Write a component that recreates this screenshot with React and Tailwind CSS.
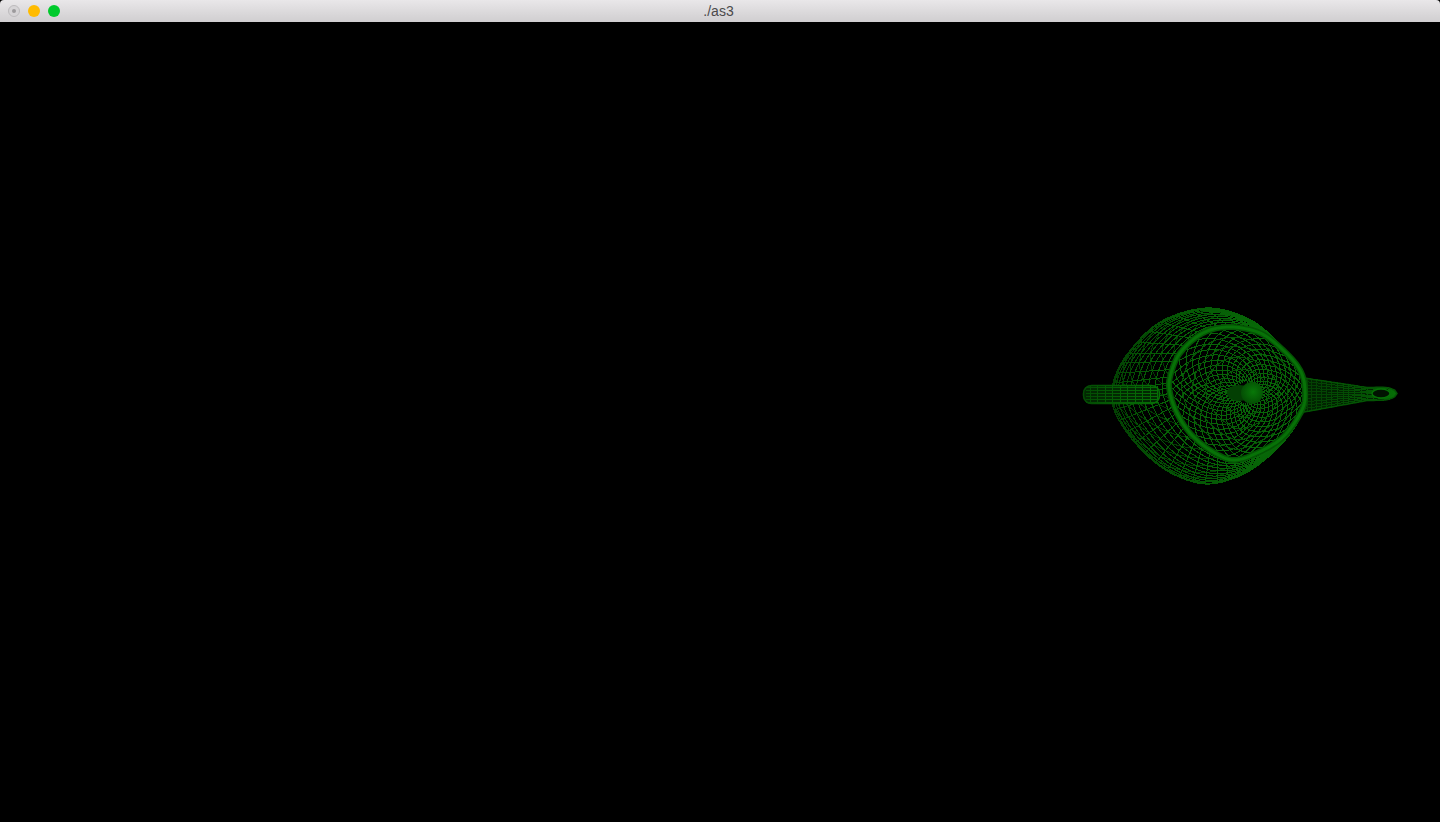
const ORIGIN_X = 1070;
const ORIGIN_Y = 273;

// key points of the wireframe, same index = same meridian
const RIM = [[1170,377],[1180,353],[1203,333],[1230,327],[1260,333],[1283,350],[1300,370],[1305,390],[1302,410],[1283,437],[1257,453],[1233,460],[1210,450],[1190,433],[1177,413],[1170,393]];
const OUTER = [[1113,383],[1128,353],[1160,322],[1205,308],[1245,317],[1274,338],[1296,366],[1306,392],[1302,414],[1287,438],[1266,459],[1240,476],[1205,484],[1167,471],[1135,443],[1114,410]];
const LID_CENTER = [1248, 393];

function spline(points, t) {
  const n = points.length;
  const u = ((t % 1) + 1) % 1 * n;
  const i = Math.floor(u);
  const f = u - i;
  const p0 = points[(i - 1 + n) % n];
  const p1 = points[i % n];
  const p2 = points[(i + 1) % n];
  const p3 = points[(i + 2) % n];
  const c = (a, b, d, e) =>
    0.5 * (2 * b + (d - a) * f + (2 * a - 5 * b + 4 * d - e) * f * f + (3 * b - a - 3 * d + e) * f * f * f);
  return [c(p0[0], p1[0], p2[0], p3[0]), c(p0[1], p1[1], p2[1], p3[1])];
}

const at = (p) => `${(p[0] - ORIGIN_X).toFixed(1)} ${(p[1] - ORIGIN_Y).toFixed(1)}`;
const line = (pts) => "M" + pts.map(at).join("L");
const mix = (a, b, k) => [a[0] + (b[0] - a[0]) * k, a[1] + (b[1] - a[1]) * k];
const range = (n) => Array.from({ length: n }, (_, i) => i);

const AROUND = 48;
const RINGS = 13;

function bodyPoint(t, s) {
  return mix(spline(RIM, t), spline(OUTER, t), Math.sin((s * Math.PI) / 2));
}

function lidPoint(t, r) {
  return mix(LID_CENTER, spline(RIM, t), r);
}

function closedCurve(points) {
  return line(range(161).map((i) => spline(points, i / 160)));
}

function bodyMesh() {
  let d = "";
  range(AROUND).forEach((a) => {
    d += line(range(RINGS + 1).map((s) => bodyPoint(a / AROUND, s / RINGS)));
  });
  range(RINGS + 1).forEach((s) => {
    d += line(range(161).map((i) => bodyPoint(i / 160, s / RINGS)));
  });
  return d;
}

function bodyDiagonals() {
  let d = "";
  range(AROUND).forEach((a) => {
    range(RINGS).forEach((s) => {
      if ((a + s) % 2 === 0) {
        d += line([bodyPoint(a / AROUND, s / RINGS), bodyPoint((a + 1) / AROUND, (s + 1) / RINGS)]);
      }
    });
  });
  return d;
}

function lidSpirals(dir, count) {
  let d = "";
  range(count).forEach((k) => {
    d += line(
      range(40).map((i) => {
        const r = 0.16 + (0.8 * i) / 39;
        return lidPoint(k / count + dir * 0.34 * (1 - r), r);
      })
    );
  });
  return d;
}

function lidRings() {
  let d = "";
  [0.36, 0.54, 0.7, 0.84].forEach((r) => {
    d += line(range(121).map((i) => lidPoint(i / 120, r)));
  });
  return d;
}

function handleMesh() {
  let d = "";
  range(6).forEach((i) => {
    const y = 387.5 + i * 3;
    d += line([[1086, y], [1158, y]]);
  });
  range(10).forEach((i) => {
    const x = 1090 + i * 7.5;
    d += line([[x, 386], [x, 403]]);
  });
  return d;
}

function spoutPoint(u, v) {
  let half = 6.5;
  if (u < 0.68) half = 17 - (10.5 * u) / 0.68;
  if (u > 0.82) half = 6.5 * Math.sqrt(Math.max(0, 1 - ((u - 0.82) / 0.18) ** 2));
  const cy = 395 - 1.5 * u;
  return [1304 + u * 93, cy + v * half];
}

function spoutMesh() {
  let d = "";
  range(11).forEach((i) => {
    const v = -1 + i / 5;
    d += line(range(25).map((k) => spoutPoint(k / 24, v)));
  });
  range(14).forEach((i) => {
    const u = Math.pow(i / 13, 1.2) * 0.75;
    d += line([spoutPoint(u, -1), spoutPoint(u, 1)]);
  });
  return d;
}

const SPOUT_OUTLINE =
  line([
    ...range(41).map((k) => spoutPoint(k / 40, -1)),
    ...range(41).map((k) => spoutPoint(1 - k / 40, 1)),
  ]) + "Z";

function Teapot() {
  return (
    <svg width="340" height="220" viewBox="0 0 340 220" fill="none" shapeRendering="crispEdges">
      <defs>
        <radialGradient id="bodyShade" gradientUnits="userSpaceOnUse" cx="168" cy="119" r="130">
          <stop offset="0.45" stopColor="#086c08" />
          <stop offset="0.75" stopColor="#055805" />
          <stop offset="1" stopColor="#023c02" />
        </radialGradient>
        <linearGradient id="handleShade" gradientUnits="userSpaceOnUse" x1="13" y1="0" x2="90" y2="0">
          <stop offset="0" stopColor="#034a03" />
          <stop offset="0.5" stopColor="#056005" />
          <stop offset="1" stopColor="#067006" />
        </linearGradient>
        <linearGradient id="spoutShade" gradientUnits="userSpaceOnUse" x1="236" y1="0" x2="326" y2="0">
          <stop offset="0" stopColor="#033f03" />
          <stop offset="0.7" stopColor="#045404" />
          <stop offset="1" stopColor="#067006" />
        </linearGradient>
        <radialGradient id="knobShade" cx="0.55" cy="0.45" r="0.6">
          <stop offset="0" stopColor="#087808" />
          <stop offset="1" stopColor="#034a03" />
        </radialGradient>
      </defs>

      {/* spout sits behind the body */}
      <path d={SPOUT_OUTLINE} fill="#012201" shapeRendering="auto" />
      <path d={spoutMesh()} stroke="url(#spoutShade)" strokeWidth="1" />
      <path d={SPOUT_OUTLINE} stroke="#045404" strokeWidth="1.5" shapeRendering="auto" />
      <ellipse cx="311" cy="120.5" rx="9" ry="4.5" fill="#011201" stroke="#067006" strokeWidth="1.5" shapeRendering="auto" />

      {/* body */}
      <path d={bodyDiagonals()} stroke="#033d03" strokeWidth="1" />
      <path d={bodyMesh()} stroke="url(#bodyShade)" strokeWidth="1" />

      {/* lid */}
      <path d={lidSpirals(1, 32)} stroke="#086408" strokeWidth="1" />
      <path d={lidSpirals(-1, 32)} stroke="#086408" strokeWidth="1" />
      <path d={lidRings()} stroke="#065206" strokeWidth="1" />

      {/* rim */}
      <path d={closedCurve(RIM)} stroke="#045404" strokeWidth="6" shapeRendering="auto" />
      <path d={closedCurve(RIM)} stroke="#077207" strokeWidth="3" shapeRendering="auto" />

      {/* knob */}
      <ellipse cx="169" cy="120" rx="12" ry="8" fill="#033f03" shapeRendering="auto" />
      <ellipse cx="182" cy="120" rx="11" ry="11" fill="url(#knobShade)" shapeRendering="auto" />

      {/* handle is in front */}
      <rect x="13" y="112" width="77" height="19" rx="8" fill="#022802" shapeRendering="auto" />
      <path d={handleMesh()} stroke="url(#handleShade)" strokeWidth="1" />
      <rect x="13.5" y="112.5" width="76" height="18" rx="8" stroke="url(#handleShade)" strokeWidth="1.5" shapeRendering="auto" />
    </svg>
  );
}

export default function App() {
  return (
    <div className="flex flex-col w-full h-[822px] bg-black overflow-hidden font-['Liberation_Sans',Arial,sans-serif]">
      {/* Title bar */}
      <div className="relative flex items-center justify-center h-[22px] shrink-0 rounded-t-[4px] bg-gradient-to-b from-[#e9e7e9] to-[#d0ced0]">
        <div className="absolute left-[8px] top-[5px] flex items-center gap-2">
          <span className="flex items-center justify-center w-3 h-3 rounded-full border border-[#bdbbbd] bg-[#d6d4d6]">
            <span className="w-1 h-1 rounded-full bg-[#9c9a9c]" />
          </span>
          <span className="w-3 h-3 rounded-full bg-[#ffbb00]" />
          <span className="w-3 h-3 rounded-full bg-[#00ca2c]" />
        </div>
        <span className="text-[14px] leading-none text-[#4b4a4b] ml-[-3px]">./as3</span>
      </div>

      {/* GL viewport */}
      <div className="flex-1 flex justify-start items-start pl-[1070px] pt-[251px]">
        <Teapot />
      </div>
    </div>
  );
}
